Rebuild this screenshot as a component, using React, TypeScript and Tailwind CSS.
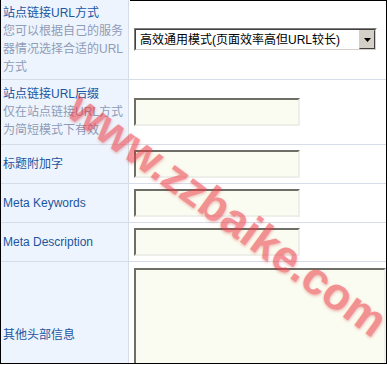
const labelCls = "text-[#1a56a0]";
const descCls = "text-[#8e9cb8]";

function Input() {
  return (
    <div className="h-[28px] w-[166px] border-2 border-t-[#6e6e66] border-l-[#6e6e66] border-b-[#efefe9] border-r-[#efefe9] bg-[#fbfcf1]" />
  );
}

function Row({ label, children, h, last }: { label: React.ReactNode; children: React.ReactNode; h: string; last?: boolean }) {
  return (
    <>
      <div className={`flex items-center border-r border-[#d6dde8] bg-[#eef4fd] pl-[2px] ${last ? "" : "border-b"} ${h}`}>
        <div className="text-[12px] leading-[18px]">{label}</div>
      </div>
      <div className={`flex items-center border-[#d6dde8] bg-white pl-[5px] ${last ? "" : "border-b"} ${h}`}>{children}</div>
    </>
  );
}

function Select() {
  return (
    <div className="flex h-[23px] w-[243px] border border-t-[#808080] border-l-[#808080] border-b-white border-r-white">
      <div className="flex flex-1 items-center border border-t-[#404040] border-l-[#404040] border-b-[#d4d0c8] border-r-[#d4d0c8] bg-white pl-[4px]">
        <span className="flex-1 text-[12px] leading-none text-black">高效通用模式(页面效率高但URL较长)</span>
        <div className="flex h-[19px] w-[16px] items-center justify-center border border-t-[#d4d0c8] border-l-[#d4d0c8] border-b-[#404040] border-r-[#404040] bg-[#d4d0c8]">
          <svg width="7" height="4" viewBox="0 0 7 4">
            <path d="M0 0h7L3.5 4z" fill="#000" />
          </svg>
        </div>
      </div>
    </div>
  );
}

export default function App() {
  return (
    <div className="relative h-[365px] w-[389px] overflow-hidden bg-white font-['Liberation_Sans','Noto_Sans_CJK_SC',sans-serif]">
      <div className="relative h-[364px] w-[387px] overflow-hidden border-b border-l border-r border-black">
        <div className="grid grid-cols-[128px_1fr]">
          <Row
            h="h-[80px]"
            label={
              <>
                <div className={labelCls}>站点链接URL方式</div>
                <div className={descCls}>您可以根据自己的服务器情况选择合适的URL方式</div>
              </>
            }
          >
            <Select />
          </Row>
          <Row
            h="h-[65px]"
            label={
              <>
                <div className={labelCls}>站点链接URL后缀</div>
                <div className={descCls}>仅在站点链接URL方式为简短模式下有效</div>
              </>
            }
          >
            <Input />
          </Row>
          <Row h="h-[39px]" label={<div className={labelCls}>标题附加字</div>}>
            <Input />
          </Row>
          <Row h="h-[39px]" label={<div className={labelCls}>Meta Keywords</div>}>
            <Input />
          </Row>
          <Row h="h-[39px]" label={<div className={labelCls}>Meta Description</div>}>
            <Input />
          </Row>
          <Row h="h-[146px]" last label={<div className={labelCls}>其他头部信息</div>}>
            <div className="h-[134px] w-[252px] border-2 border-t-[#6e6e66] border-l-[#6e6e66] border-b-[#efefe9] border-r-[#efefe9] bg-[#fbfcf1]" />
          </Row>
        </div>
        <div className="absolute left-[129px] right-0 top-0 h-px bg-black" />
      </div>
      <span
        className="pointer-events-none absolute left-[228px] top-[214px] whitespace-nowrap font-['Liberation_Sans',sans-serif] text-[45px] font-bold leading-none text-[#ec3a44] opacity-55 [text-shadow:1px_1px_3px_rgba(200,0,0,0.5)]"
        style={{ transform: "translate(-50%,-50%) rotate(36deg)" }}
      >
        www.zzbaike.com
      </span>
    </div>
  );
}
